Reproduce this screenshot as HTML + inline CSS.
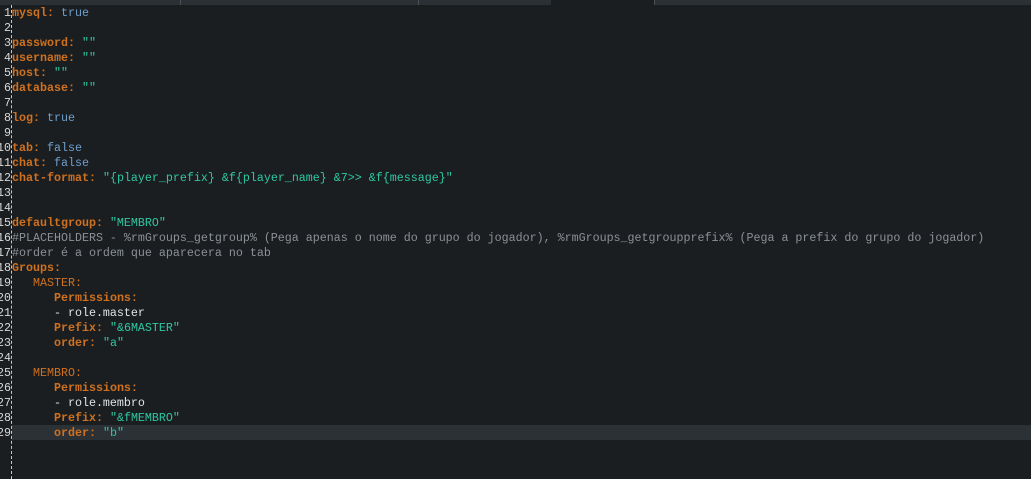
<!DOCTYPE html>
<html><head><meta charset="utf-8"><style>
html,body{margin:0;padding:0;width:1031px;height:479px;overflow:hidden;background:#1b1e21;}
.tabs{position:absolute;left:0;top:0;width:1031px;height:5px;background:#2b3035;}
.tabs i{position:absolute;top:0;height:5px;width:1px;background:#4a5056;}
.act{position:absolute;left:551px;top:0;width:103px;height:5px;background:#1b1e21;}
.gut{position:absolute;left:11px;top:5px;height:474px;border-left:1px dashed #c8c8c8;}
.hl{position:absolute;left:12px;top:425px;width:1019px;height:15px;background:#2c3136;}
.code{position:absolute;left:0;top:6px;font-family:"Liberation Mono",monospace;font-size:11.67px;line-height:15px;color:#e2e2e2;}
.l{height:15px;position:relative;width:1031px;}
.n{position:absolute;left:0;width:11px;overflow:hidden;text-align:right;color:#d8d8d8;direction:rtl;white-space:pre;}
.t{position:absolute;left:12px;white-space:pre;}
.k{color:#d0711f;font-weight:bold}
.kn{color:#d0711f}
.b{color:#6f9fcc}
.s{color:#2fc7a2}
.c{color:#8c9196}
</style></head><body>
<div class="tabs"><i style="left:180px"></i><i style="left:418px"></i><i style="left:654px"></i></div>
<div class="act"></div>
<div class="hl"></div>
<div class="gut"></div>
<div class="code"><div class="l"><span class="n">1</span><span class="t"><span class="k">mysql:</span> <span class="b">true</span></span></div><div class="l"><span class="n">2</span></div><div class="l"><span class="n">3</span><span class="t"><span class="k">password:</span> <span class="s">""</span></span></div><div class="l"><span class="n">4</span><span class="t"><span class="k">username:</span> <span class="s">""</span></span></div><div class="l"><span class="n">5</span><span class="t"><span class="k">host:</span> <span class="s">""</span></span></div><div class="l"><span class="n">6</span><span class="t"><span class="k">database:</span> <span class="s">""</span></span></div><div class="l"><span class="n">7</span></div><div class="l"><span class="n">8</span><span class="t"><span class="k">log:</span> <span class="b">true</span></span></div><div class="l"><span class="n">9</span></div><div class="l"><span class="n">10</span><span class="t"><span class="k">tab:</span> <span class="b">false</span></span></div><div class="l"><span class="n">11</span><span class="t"><span class="k">chat:</span> <span class="b">false</span></span></div><div class="l"><span class="n">12</span><span class="t"><span class="k">chat-format:</span> <span class="s">"{player_prefix} &amp;f{player_name} &amp;7&gt;&gt; &amp;f{message}"</span></span></div><div class="l"><span class="n">13</span></div><div class="l"><span class="n">14</span></div><div class="l"><span class="n">15</span><span class="t"><span class="k">defaultgroup:</span> <span class="s">"MEMBRO"</span></span></div><div class="l"><span class="n">16</span><span class="t c">#PLACEHOLDERS - %rmGroups_getgroup% (Pega apenas o nome do grupo do jogador), %rmGroups_getgroupprefix% (Pega a prefix do grupo do jogador)</span></div><div class="l"><span class="n">17</span><span class="t c">#order é a ordem que aparecera no tab</span></div><div class="l"><span class="n">18</span><span class="t"><span class="k">Groups:</span></span></div><div class="l"><span class="n">19</span><span class="t">   <span class="kn">MASTER:</span></span></div><div class="l"><span class="n">20</span><span class="t">      <span class="k">Permissions:</span></span></div><div class="l"><span class="n">21</span><span class="t">      - role.master</span></div><div class="l"><span class="n">22</span><span class="t">      <span class="k">Prefix:</span> <span class="s">"&amp;6MASTER"</span></span></div><div class="l"><span class="n">23</span><span class="t">      <span class="k">order:</span> <span class="s">"a"</span></span></div><div class="l"><span class="n">24</span></div><div class="l"><span class="n">25</span><span class="t">   <span class="kn">MEMBRO:</span></span></div><div class="l"><span class="n">26</span><span class="t">      <span class="k">Permissions:</span></span></div><div class="l"><span class="n">27</span><span class="t">      - role.membro</span></div><div class="l"><span class="n">28</span><span class="t">      <span class="k">Prefix:</span> <span class="s">"&amp;fMEMBRO"</span></span></div><div class="l"><span class="n">29</span><span class="t">      <span class="k">order:</span> <span class="s">"b"</span></span></div></div>
</body></html>
